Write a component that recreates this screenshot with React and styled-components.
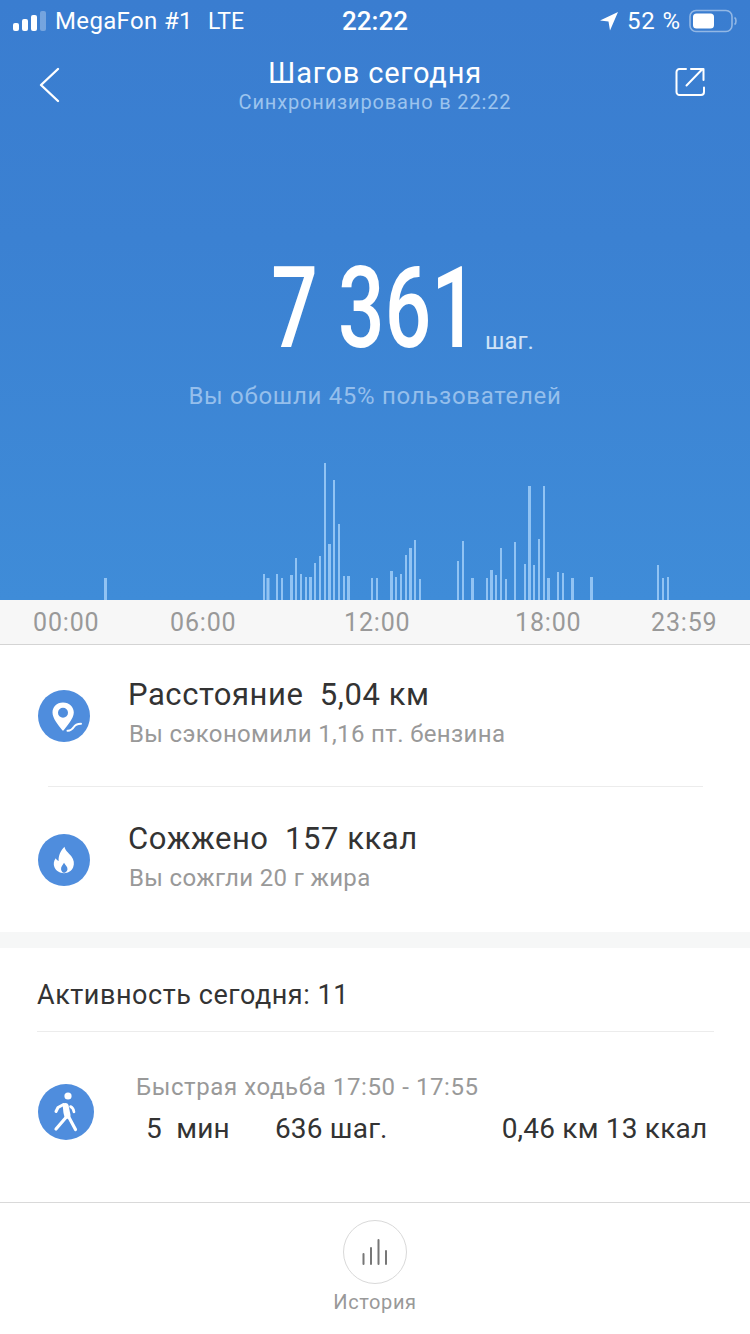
import React from "react";
import styled, { createGlobalStyle } from "styled-components";

const Global = createGlobalStyle`
  html, body { margin: 0; padding: 0; background: #fff; }
  body { font-family: Roboto, "Noto Sans", sans-serif; }
  * { box-sizing: border-box; }
`;

const Page = styled.div`
  width: 750px;
  height: 1334px;
  display: flex;
  flex-direction: column;
  overflow: hidden;
  background: #fff;
`;

const Hero = styled.header`
  height: 600px;
  display: flex;
  flex-direction: column;
  background: linear-gradient(180deg, #3a7dd0 0%, #3b81d2 40%, #3f8cd8 100%);
  color: #fff;
`;

const StatusBar = styled.div`
  height: 42px;
  padding: 0 13px;
  display: grid;
  grid-template-columns: 1fr auto 1fr;
  align-items: center;
  font-size: 24px;
`;

const StatusLeft = styled.div`
  display: flex;
  align-items: center;
  gap: 8px;
`;

const Carrier = styled.span`
  letter-spacing: 0.35px;
  margin-right: 7px;
`;

const NetworkType = styled.span`
  font-size: 23px;
`;

const StatusTime = styled.div`
  font-weight: 500;
  font-size: 26px;
`;

const StatusRight = styled.div`
  display: flex;
  align-items: center;
  justify-content: flex-end;
  gap: 8px;
`;

const BatteryLevel = styled.span`
  font-size: 24px;
  letter-spacing: 0.9px;
`;

const NavBar = styled.div`
  height: 86px;
  padding: 0 45px;
  display: grid;
  grid-template-columns: 1fr auto 1fr;
  align-items: start;
`;

const NavIcon = styled.svg`
  display: block;
  margin-top: 25px;
  margin-left: ${(p) => p.$shift || 0}px;
  justify-self: ${(p) => p.$align || "start"};
`;

const NavTitle = styled.div`
  text-align: center;
  padding-top: 13px;
`;

const Title = styled.div`
  font-size: 29px;
  line-height: 36px;
  letter-spacing: 0.8px;
`;

const Subtitle = styled.div`
  font-size: 20px;
  line-height: 22px;
  letter-spacing: 0.85px;
  color: #9cc4ee;
`;

const Totals = styled.div`
  margin-top: 125px;
  height: 112px;
  padding-left: 274px;
  display: flex;
  align-items: flex-end;
`;

const BigNumberBox = styled.div`
  width: 200px;
  display: flex;
  justify-content: center;
`;

const BigNumber = styled.span`
  flex: none;
  display: inline-block;
  font-size: 113px;
  font-weight: 500;
  line-height: 112px;
  transform: scaleX(0.725);
  white-space: nowrap;
`;

const Unit = styled.span`
  font-size: 24px;
  line-height: 30px;
  margin-left: 11px;
  margin-bottom: 9px;
  color: #cfe2f7;
`;

const Percent = styled.div`
  margin-top: 16px;
  text-align: center;
  font-size: 24px;
  line-height: 30px;
  letter-spacing: 0.7px;
  color: #95bfec;
`;

const Chart = styled.svg`
  display: block;
  margin-top: auto;
`;

const Axis = styled.div`
  height: 45px;
  padding-left: 33px;
  display: grid;
  grid-template-columns: 137px 174px 171px 136px 1fr;
  align-items: center;
  background: #f7f7f7;
  border-bottom: 1px solid #d4d4d4;
  color: #999;
  font-size: 25px;
  letter-spacing: 0.85px;
`;

const Metrics = styled.section`
  height: 287px;
  padding: 0 47px 0 38px;
`;

const Metric = styled.div`
  height: ${(p) => p.$h}px;
  display: flex;
  align-items: center;
  gap: 39px;
`;

const MetricDivider = styled.div`
  height: 1px;
  margin-left: 10px;
  background: #ececec;
`;

const RoundIcon = styled.div`
  flex: none;
  width: ${(p) => p.$size}px;
  height: ${(p) => p.$size}px;
  border-radius: 50%;
  background: #4f8ddd;
  display: flex;
  align-items: center;
  justify-content: center;
`;

const MetricText = styled.div`
  display: flex;
  flex-direction: column;
  gap: 6px;
  padding-bottom: 5px;
`;

const MetricTitle = styled.div`
  font-size: 31px;
  line-height: 36px;
  letter-spacing: 0.55px;
  margin-left: -1px;
  color: #333;
  white-space: pre;
`;

const MetricSub = styled.div`
  font-size: 24px;
  line-height: 30px;
  letter-spacing: 0.35px;
  color: #999;
`;

const Separator = styled.div`
  height: 16px;
  background: #f6f7f7;
`;

const Activity = styled.section`
  height: 254px;
  padding: 0 36px 0 37px;
  display: flex;
  flex-direction: column;
`;

const ActivityHead = styled.div`
  height: 84px;
  padding-top: 10px;
  display: flex;
  align-items: center;
  border-bottom: 1px solid #ececec;
  font-size: 27px;
  letter-spacing: 0.55px;
  color: #333;
`;

const ActivityRow = styled.div`
  display: flex;
  align-items: center;
  gap: 42px;
  padding: 52px 0 0 1px;
  margin-top: -6px;
`;

const ActivityBody = styled.div`
  flex: 1;
  margin-top: -5px;
`;

const ActivityTitle = styled.div`
  font-size: 24px;
  line-height: 28px;
  letter-spacing: 0.6px;
  color: #999;
`;

const Stats = styled.div`
  display: flex;
  align-items: center;
  padding-left: 10px;
  margin-top: 11px;
  font-size: 28px;
  line-height: 34px;
  color: #333;
  white-space: pre;
`;

const Stat = styled.span`
  letter-spacing: 0.2px;
  margin-left: ${(p) => p.$left || 0}px;
`;

const TabBar = styled.footer`
  flex: 1;
  border-top: 1px solid #d9d9d9;
  display: flex;
  flex-direction: column;
  align-items: center;
  padding-top: 17px;
`;

const TabCircle = styled.div`
  width: 64px;
  height: 64px;
  border-radius: 50%;
  border: 1px solid #d9d9d9;
  display: flex;
  align-items: center;
  justify-content: center;
`;

const TabLabel = styled.div`
  margin-top: 5px;
  font-size: 20px;
  line-height: 26px;
  letter-spacing: 0.6px;
  color: #999;
`;

const BARS = [
  [104, 3, 22], [263, 2, 26], [266.5, 3, 22], [276, 2, 26], [281, 2, 22], [290, 3, 25], [295, 2, 42], [300, 2, 26],
  [305, 2, 23], [309, 3, 23], [314, 2, 37], [319, 2, 44], [324, 2, 137], [328, 3, 56], [333, 2, 120], [338, 2, 76],
  [343, 2, 24], [347, 3, 24], [371, 2, 22], [376, 2, 22], [390, 3, 29], [395, 2, 23], [400, 2, 26], [405, 2, 45],
  [409, 3, 52], [414, 2, 60], [419, 2, 21], [457, 2, 39], [462, 2, 59], [471, 3, 22], [486, 2, 22], [490, 3, 30],
  [495, 2, 25], [500, 2, 52], [505, 2, 21], [514, 2, 58], [524, 2, 36], [528, 3, 114], [533, 2, 35], [538, 2, 61],
  [543, 2, 114], [547, 3, 22], [557, 2, 28], [562, 2, 27], [571, 3, 22], [590, 3, 23], [657, 2, 35], [662, 2, 22],
  [667, 2, 23],
];

const SignalBars = () => (
  <svg width="34" height="20" viewBox="0 0 34 20">
    <rect x="0" y="12" width="6" height="8" rx="2" fill="#fff" />
    <rect x="9" y="8" width="6" height="12" rx="2" fill="#fff" />
    <rect x="18" y="4" width="6" height="16" rx="2" fill="#fff" />
    <rect x="27" y="0" width="6" height="20" rx="2" fill="#fff" opacity="0.3" />
  </svg>
);

const LocationArrow = () => (
  <svg width="20" height="20" viewBox="0 0 20 20">
    <path d="M19 1 L1 9.5 L9.5 10.5 L11 19.5 Z" fill="#fff" />
  </svg>
);

const Battery = () => (
  <svg width="48" height="24" viewBox="0 0 48 24">
    <rect x="1" y="1.5" width="42" height="21" rx="6" fill="none" stroke="#fff" strokeOpacity="0.45" strokeWidth="1.6" />
    <rect x="4" y="4.5" width="21" height="15" rx="3.5" fill="#fff" />
    <path d="M45.5 8.5 C47.5 9.5 47.5 14.5 45.5 15.5" fill="none" stroke="#fff" strokeOpacity="0.45" strokeWidth="1.6" />
  </svg>
);

const PinIcon = () => (
  <svg width="38" height="38" viewBox="0 0 38 38">
    <path fillRule="evenodd" fill="#fff" d="M18 5.5 C11.5 5.5 7.5 10.2 7.5 15.6 C7.5 21.5 13.5 28.5 17.3 33.3 Q18 34 18.7 33.3 C22 29 28.8 21.5 28.8 15.6 C28.8 10.2 24.5 5.5 18 5.5 Z M18 10.8 A5 5 0 1 1 18 20.8 A5 5 0 1 1 18 10.8 Z" />
    <path d="M22.5 33.8 C26 34 27.5 32 29 29.8 C30 28 33 27 36 26.8" fill="none" stroke="#fff" strokeWidth="2" strokeLinecap="round" />
  </svg>
);

const FlameIcon = () => (
  <svg width="22" height="28" viewBox="0 0 24 30">
    <path fillRule="evenodd" fill="#fff" d="M12.5 0.5 C13.5 5 17 7 20 11 C23 15 23.5 19 22 23 C20.5 27 16.5 29.5 12 29.5 C7.5 29.5 3.2 27 1.6 23 C0.2 19.5 0.8 15.5 3 13 C3.8 14.6 4.8 15.6 6.2 16 C5.6 10.5 8.5 4.5 12.5 0.5 Z M12 18 C10.5 20.5 8.5 22.5 8.8 25 C9 27 10.3 28.5 11.6 29 C13.5 29 15.6 27.2 15.8 25 C16 22.5 13.5 20.5 12 18 Z" />
  </svg>
);

const WalkerIcon = () => (
  <svg width="34" height="40" viewBox="0 0 34 40">
    <circle cx="19" cy="4" r="3.6" fill="#fff" />
    <path d="M14.5 12.5 L9 15.5 L7 19.5" fill="none" stroke="#fff" strokeWidth="3" strokeLinecap="round" strokeLinejoin="round" />
    <path d="M13.5 12 Q18 9.5 19.5 13 L21.5 23 L21 26.5 L16 27 L14.5 21 Z" fill="#fff" />
    <path d="M16.5 26 L7 37 M19.5 24.5 L26.5 37.5" fill="none" stroke="#fff" strokeWidth="3.2" strokeLinecap="round" strokeLinejoin="round" />
    <path d="M21.5 14.5 Q24.5 16 25 20" fill="none" stroke="#fff" strokeWidth="2.6" strokeLinecap="round" />
  </svg>
);

export default function App() {
  return (
    <Page>
      <Global />
      <Hero>
        <StatusBar>
          <StatusLeft>
            <SignalBars />
            <Carrier>MegaFon #1</Carrier>
            <NetworkType>LTE</NetworkType>
          </StatusLeft>
          <StatusTime>22:22</StatusTime>
          <StatusRight>
            <LocationArrow />
            <BatteryLevel>52 %</BatteryLevel>
            <Battery />
          </StatusRight>
        </StatusBar>
        <NavBar>
          <NavIcon $shift={-7} width="22" height="36" viewBox="0 0 22 36">
            <path d="M20 2 L3 18 L20 34" fill="none" stroke="#fff" strokeWidth="2.4" strokeLinecap="round" strokeLinejoin="round" />
          </NavIcon>
          <NavTitle>
            <Title>Шагов сегодня</Title>
            <Subtitle>Синхронизировано в 22:22</Subtitle>
          </NavTitle>
          <NavIcon $align="end" width="30" height="30" viewBox="0 0 30 30">
            <path d="M11 2 H4.5 A3 3 0 0 0 1.5 5 V25 A3 3 0 0 0 4.5 28 H26 A3 3 0 0 0 29 25 V20.5" fill="none" stroke="#fff" strokeWidth="2" strokeLinecap="round" />
            <path d="M11.5 18.5 L27.5 2 M16 2 H28.5 V13" fill="none" stroke="#fff" strokeWidth="2" strokeLinecap="round" strokeLinejoin="round" />
          </NavIcon>
        </NavBar>
        <Totals>
          <BigNumberBox>
            <BigNumber>7 361</BigNumber>
          </BigNumberBox>
          <Unit>шаг.</Unit>
        </Totals>
        <Percent>Вы обошли 45% пользователей</Percent>
        <Chart width="750" height="140" viewBox="0 0 750 140">
          {BARS.map(([x, w, h]) => (
            <rect key={x} x={x} y={140 - h} width={w} height={h} fill="#91c3f3" />
          ))}
        </Chart>
      </Hero>
      <Axis>
        <span>00:00</span>
        <span>06:00</span>
        <span>12:00</span>
        <span>18:00</span>
        <span>23:59</span>
      </Axis>
      <Metrics>
        <Metric $h={141}>
          <RoundIcon $size={52}><PinIcon /></RoundIcon>
          <MetricText>
            <MetricTitle>Расстояние  5,04 км</MetricTitle>
            <MetricSub>Вы сэкономили 1,16 пт. бензина</MetricSub>
          </MetricText>
        </Metric>
        <MetricDivider />
        <Metric $h={145}>
          <RoundIcon $size={52}><FlameIcon /></RoundIcon>
          <MetricText>
            <MetricTitle>Сожжено  157 ккал</MetricTitle>
            <MetricSub>Вы сожгли 20 г жира</MetricSub>
          </MetricText>
        </Metric>
      </Metrics>
      <Separator />
      <Activity>
        <ActivityHead>Активность сегодня: 11</ActivityHead>
        <ActivityRow>
          <RoundIcon $size={56}><WalkerIcon /></RoundIcon>
          <ActivityBody>
            <ActivityTitle>Быстрая ходьба 17:50 - 17:55</ActivityTitle>
            <Stats>
              <Stat>5  мин</Stat>
              <Stat $left={45}>636 шаг.</Stat>
              <Stat $left={114}>0,46 км 13 ккал</Stat>
            </Stats>
          </ActivityBody>
        </ActivityRow>
      </Activity>
      <TabBar>
        <TabCircle>
          <svg width="28" height="26" viewBox="0 0 28 26">
            <path d="M2.5 15 V25 M10 9 V25 M17.5 1 V25 M25 12 V25" fill="none" stroke="#777" strokeWidth="2" strokeLinecap="round" />
          </svg>
        </TabCircle>
        <TabLabel>История</TabLabel>
      </TabBar>
    </Page>
  );
}
